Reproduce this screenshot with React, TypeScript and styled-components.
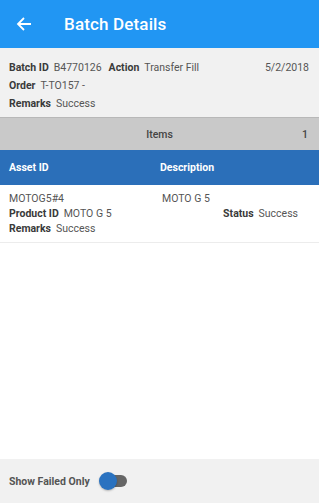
import React, { useState } from "react";
import styled, { createGlobalStyle } from "styled-components";

const GlobalStyle = createGlobalStyle`
  html, body {
    margin: 0;
    padding: 0;
    height: 100%;
    background: #ffffff;
  }
  body {
    font-family: Roboto, "Liberation Sans", Arial, sans-serif;
    color: #333;
  }
  #root {
    height: 100%;
  }
`;

const App: React.FC = () => {
  const [failedOnly, setFailedOnly] = useState(true);

  return (
    <>
      <GlobalStyle />
      <S.Page>
        <S.AppBar>
          <S.BackButton aria-label="Back">
            <svg width="16" height="16" viewBox="0 0 16 16" fill="none">
              <path d="M15 8H2M8 2L2 8l6 6" stroke="#fff" strokeWidth="1.8" />
            </svg>
          </S.BackButton>
          <S.Title>Batch Details</S.Title>
        </S.AppBar>

        <S.Summary>
          <S.SummaryLine>
            <S.Field>
              <S.Label>Batch ID</S.Label>
              <S.Value>B4770126</S.Value>
            </S.Field>
            <S.Field>
              <S.Label>Action</S.Label>
              <S.Value>Transfer Fill</S.Value>
            </S.Field>
            <S.Date>5/2/2018</S.Date>
          </S.SummaryLine>
          <S.SummaryLine>
            <S.Field>
              <S.Label>Order</S.Label>
              <S.Value>T-TO157 -</S.Value>
            </S.Field>
          </S.SummaryLine>
          <S.SummaryLine>
            <S.Field>
              <S.Label>Remarks</S.Label>
              <S.Value>Success</S.Value>
            </S.Field>
          </S.SummaryLine>
        </S.Summary>

        <S.ItemsBar>
          <S.ItemsTitle>Items</S.ItemsTitle>
          <S.ItemsCount>1</S.ItemsCount>
        </S.ItemsBar>

        <S.TableHead>
          <S.HeadCell>Asset ID</S.HeadCell>
          <S.HeadCell>Description</S.HeadCell>
        </S.TableHead>

        <S.ItemRow>
          <S.ItemLine $split>
            <S.Value>MOTOG5#4</S.Value>
            <S.Value>MOTO G 5</S.Value>
          </S.ItemLine>
          <S.ItemLine $status>
            <S.Field>
              <S.Label>Product ID</S.Label>
              <S.Value>MOTO G 5</S.Value>
            </S.Field>
            <S.Field>
              <S.Label>Status</S.Label>
              <S.Value>Success</S.Value>
            </S.Field>
          </S.ItemLine>
          <S.ItemLine>
            <S.Field>
              <S.Label>Remarks</S.Label>
              <S.Value>Success</S.Value>
            </S.Field>
          </S.ItemLine>
        </S.ItemRow>

        <S.Spacer />

        <S.Footer>
          <S.FooterLabel>Show Failed Only</S.FooterLabel>
          <S.Toggle
            type="button"
            $on={failedOnly}
            onClick={() => setFailedOnly(!failedOnly)}
            aria-pressed={failedOnly}
          >
            <S.Thumb $on={failedOnly} />
          </S.Toggle>
        </S.Footer>
      </S.Page>
    </>
  );
};

const S = {
  Page: styled.div`
    display: flex;
    flex-direction: column;
    height: 100vh;
    font-size: 10.5px;
  `,

  AppBar: styled.header`
    display: flex;
    align-items: center;
    height: 48px;
    background: #2196f3;
    flex-shrink: 0;
  `,

  BackButton: styled.button`
    display: flex;
    align-items: center;
    justify-content: center;
    width: 48px;
    height: 48px;
    margin-right: 16px;
    padding: 0;
    border: none;
    background: transparent;
    cursor: pointer;
  `,

  Title: styled.h1`
    margin: 0;
    color: #fff;
    font-size: 17px;
    font-weight: 500;
    letter-spacing: 0.15px;
  `,

  Summary: styled.section`
    background: #f1f1f1;
    padding: 10px 10px 5px 9px;
    border-bottom: 1px solid #b8b8b8;
  `,

  SummaryLine: styled.div`
    display: flex;
    align-items: center;
    gap: 7px;
    height: 18px;
  `,

  Field: styled.span`
    display: inline-flex;
    gap: 5px;
    white-space: nowrap;
  `,

  Label: styled.span`
    font-weight: 700;
    color: #3a3a3a;
  `,

  Value: styled.span`
    color: #555;
  `,

  Date: styled.span`
    margin-left: auto;
    color: #555;
  `,

  ItemsBar: styled.div`
    position: relative;
    display: flex;
    align-items: center;
    justify-content: center;
    height: 32px;
    background: #c9c9c9;
    color: #444;
  `,

  ItemsTitle: styled.span`
    font-weight: 500;
  `,

  ItemsCount: styled.span`
    position: absolute;
    right: 11px;
    font-weight: 500;
  `,

  TableHead: styled.div`
    display: grid;
    grid-template-columns: 151px 1fr;
    align-items: center;
    height: 35px;
    padding-left: 9px;
    background: #2b6fb9;
  `,

  HeadCell: styled.span`
    color: #fff;
    font-weight: 700;
  `,

  ItemRow: styled.div`
    padding: 6px 21px 6px 9px;
    border-bottom: 1px solid #ececec;
  `,

  ItemLine: styled.div<{ $split?: boolean; $status?: boolean }>`
    display: ${(props) => (props.$split ? "grid" : "flex")};
    grid-template-columns: 153px 1fr;
    justify-content: ${(props) => (props.$status ? "space-between" : "flex-start")};
    align-items: center;
    height: 15px;
  `,

  Spacer: styled.div`
    flex: 1;
  `,

  Footer: styled.footer`
    display: flex;
    align-items: center;
    gap: 9px;
    height: 44px;
    padding-left: 9px;
    background: #f1f1f1;
    flex-shrink: 0;
  `,

  FooterLabel: styled.span`
    font-weight: 700;
    color: #555;
  `,

  Toggle: styled.button<{ $on: boolean }>`
    position: relative;
    width: 28px;
    height: 18px;
    padding: 0;
    border: none;
    background: transparent;
    cursor: pointer;

    &::before {
      content: "";
      position: absolute;
      left: 8px;
      top: 3px;
      width: 20px;
      height: 12px;
      border-radius: 6px;
      background: ${(props) => (props.$on ? "#666" : "#bdbdbd")};
    }
  `,

  Thumb: styled.span<{ $on: boolean }>`
    position: absolute;
    top: 0;
    left: ${(props) => (props.$on ? "0" : "10px")};
    width: 18px;
    height: 18px;
    border-radius: 50%;
    background: ${(props) => (props.$on ? "#2a72c0" : "#fafafa")};
    box-shadow: 0 1px 2px rgba(0, 0, 0, 0.25);
  `,
};

export default App;
